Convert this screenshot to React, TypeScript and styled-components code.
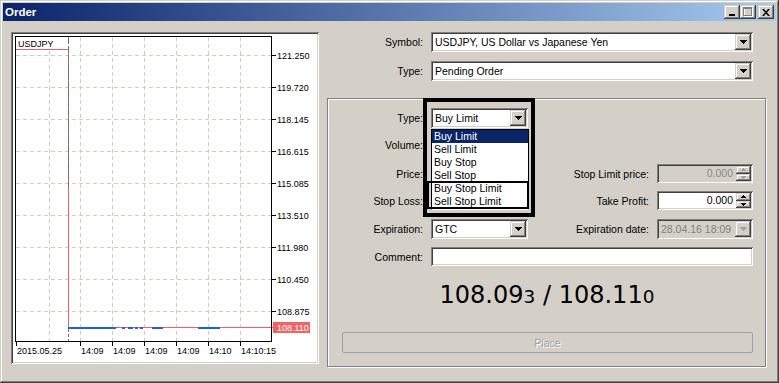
import React from "react";
import styled, { createGlobalStyle } from "styled-components";

const GlobalStyle = createGlobalStyle`
  html, body { margin: 0; padding: 0; background: #d4d0c8; }
  body {
    font-family: "Liberation Sans", Arial, sans-serif;
    font-size: 10.5px;
    color: #000;
  }
  * { box-sizing: border-box; }
`;

const raised = `
  background: #d4d0c8;
  box-shadow: inset -1px -1px #404040, inset 1px 1px #d4d0c8,
    inset -2px -2px #808080, inset 2px 2px #ffffff;
`;

const sunken = `
  box-shadow: inset 1px 1px #808080, inset -1px -1px #ffffff,
    inset 2px 2px #404040, inset -2px -2px #d4d0c8;
`;

const Window = styled.div`
  width: 779px;
  height: 383px;
  padding: 3px;
  display: flex;
  flex-direction: column;
  background: #d4d0c8;
  box-shadow: inset -1px -1px #404040, inset 1px 1px #d4d0c8,
    inset -2px -2px #808080, inset 2px 2px #ffffff;
`;

const TitleBar = styled.div`
  height: 18px;
  display: flex;
  align-items: center;
  padding: 0 2px 0 2px;
  background: linear-gradient(to right, #0a246a, #a6caf0);
`;

const Title = styled.div`
  flex: 1;
  color: #fff;
  font-weight: bold;
  font-size: 11.5px;
`;

const TitleButton = styled.div<{ $gap?: boolean }>`
  ${raised}
  width: 16px;
  height: 14px;
  margin-left: ${({ $gap }) => ($gap ? "2px" : "0")};
  display: flex;
  align-items: center;
  justify-content: center;
`;

const Body = styled.div`
  display: flex;
  gap: 8px;
  padding: 11px 0 0 8px;
`;

const ChartPanel = styled.div`
  ${sunken}
  width: 308px;
  height: 332px;
  padding: 2px;
  background: #fff;
  svg { display: block; }
`;

const RightColumn = styled.div`
  width: 440px;
  display: flex;
  flex-direction: column;
`;

const TopForm = styled.div`
  display: grid;
  grid-template-columns: 96px 322px;
  column-gap: 8px;
  row-gap: 9px;
`;

const Label = styled.div`
  line-height: 20px;
  text-align: right;
  white-space: nowrap;
`;

const Combo = styled.div<{ $disabled?: boolean }>`
  ${sunken}
  height: 20px;
  padding: 2px;
  display: flex;
  background: ${({ $disabled }) => ($disabled ? "#d4d0c8" : "#fff")};
  color: ${({ $disabled }) => ($disabled ? "#808080" : "#000")};
`;

const ComboText = styled.div`
  flex: 1;
  padding-left: 2px;
  line-height: 16px;
  white-space: nowrap;
  overflow: hidden;
`;

const DropButton = styled.div`
  ${raised}
  width: 16px;
  display: flex;
  align-items: center;
  justify-content: center;
`;

const Edit = styled.div<{ $disabled?: boolean; $span?: boolean }>`
  ${sunken}
  height: 19px;
  padding: 2px;
  display: flex;
  grid-column: ${({ $span }) => ($span ? "2 / 5" : "auto")};
  background: ${({ $disabled }) => ($disabled ? "#d4d0c8" : "#fff")};
  color: ${({ $disabled }) => ($disabled ? "#8a8a8a" : "#000")};
`;

const EditText = styled.div`
  flex: 1;
  text-align: right;
  padding-right: 3px;
  line-height: 15px;
`;

const SpinBox = styled.div`
  width: 15px;
  display: flex;
  flex-direction: column;
`;

const SpinButton = styled.div`
  ${raised}
  flex: 1;
  display: flex;
  align-items: center;
  justify-content: center;
`;

const GroupBox = styled.div`
  margin-top: 17px;
  width: 439px;
  border: 1px solid #808080;
  box-shadow: inset 1px 1px 0 #fff, 1px 1px 0 #fff;
  padding: 9px 12px 13px 1px;
  display: flex;
  flex-direction: column;
`;

const FormGrid = styled.div`
  display: grid;
  grid-template-columns: 94px 97px 113px 96px;
  grid-template-rows: 27px 29px 27px 28px 28px 19px;
  column-gap: 8px;
  align-items: start;
`;

const OverlayCell = styled.div`
  position: relative;
  z-index: 5;
`;

const DropList = styled.div`
  position: absolute;
  left: 0;
  top: 21px;
  width: 98px;
  background: #fff;
  border: 1px solid #000;
`;

const DropItem = styled.div<{ $selected?: boolean }>`
  height: 13px;
  line-height: 13px;
  padding-left: 2px;
  white-space: nowrap;
  background: ${({ $selected }) => ($selected ? "#0a246a" : "transparent")};
  color: ${({ $selected }) => ($selected ? "#fff" : "#000")};
`;

const Highlight = styled.div<{ $w: number; $h: number; $l: number; $t: number; $b: number }>`
  position: absolute;
  left: ${({ $l }) => $l}px;
  top: ${({ $t }) => $t}px;
  width: ${({ $w }) => $w}px;
  height: ${({ $h }) => $h}px;
  border: ${({ $b }) => $b}px solid #000;
  pointer-events: none;
`;

const PriceLine = styled.div`
  margin-top: 17px;
  margin-right: -12px;
  padding-left: 0;
  text-align: center;
  font-family: "DejaVu Sans", Verdana, sans-serif;
  font-size: 24px;
  line-height: 24px;
`;

const SmallDigit = styled.span`
  font-size: 18.5px;
`;

const PlaceButton = styled.div`
  margin: 23px 0 0 13px;
  height: 21px;
  border: 1px solid #a0a0a0;
  border-radius: 2px;
  display: flex;
  align-items: center;
  justify-content: center;
  color: #a0a0a0;
  text-shadow: 1px 1px 0 #fff;
`;

const DownArrow = ({ color = "#000" }: { color?: string }) => (
  <svg width="7" height="4" viewBox="0 0 7 4">
    <path d="M0 0H7V1H6V2H5V3H4V4H3V3H2V2H1V1H0Z" fill={color} />
  </svg>
);

const SpinArrow = ({ up, color = "#000" }: { up?: boolean; color?: string }) => (
  <svg width="5" height="3" viewBox="0 0 5 3" style={{ transform: up ? "none" : "scaleY(-1)" }}>
    <path d="M2 0H3V1H4V2H5V3H0V2H1V1H2Z" fill={color} />
  </svg>
);

const ComboBox = ({ text, disabled }: { text: string; disabled?: boolean }) => (
  <Combo $disabled={disabled}>
    <ComboText>{text}</ComboText>
    <DropButton>
      <DownArrow color={disabled ? "#a0a0a0" : "#000"} />
    </DropButton>
  </Combo>
);

const SpinEdit = ({ value = "", disabled }: { value?: string; disabled?: boolean }) => (
  <Edit $disabled={disabled}>
    <EditText>{value}</EditText>
    <SpinBox>
      <SpinButton>
        <SpinArrow up color={disabled ? "#a0a0a0" : "#000"} />
      </SpinButton>
      <SpinButton>
        <SpinArrow color={disabled ? "#a0a0a0" : "#000"} />
      </SpinButton>
    </SpinBox>
  </Edit>
);

const gridY = [55, 87, 119, 151, 183, 215, 247, 279, 311];
const prices = ["121.250", "119.720", "118.145", "116.615", "115.085", "113.510", "111.980", "110.450", "108.875"];
const gridX = [49, 80, 112, 144, 176, 208, 240];
const times: [number, string][] = [
  [16, "2015.05.25"],
  [80, "14:09"],
  [112, "14:09"],
  [144, "14:09"],
  [176, "14:09"],
  [208, "14:10"],
  [240, "14:10:15"],
];
const blueBars: [number, number][] = [
  [68, 116], [122, 125], [128, 133], [135, 138], [140, 143], [152, 163], [198, 220],
];

const Chart = () => (
  <svg width="304" height="328" fontFamily="Liberation Sans, Arial, sans-serif" fontSize="9">
    <g transform="translate(-13,-34)" shapeRendering="crispEdges">
      {gridY.map((y) => (
        <line key={"h" + y} x1={16} x2={271} y1={y + 0.5} y2={y + 0.5} stroke="#cfcdc0" strokeDasharray="4 3" />
      ))}
      {gridX.map((x) => (
        <line key={"v" + x} x1={x + 0.5} x2={x + 0.5} y1={37} y2={341} stroke="#cfcdc0" strokeDasharray="4 3" />
      ))}
      <rect x={16} y={37} width={51} height={12} fill="#fff" />
      <text x={18} y={46.5} fill="#000">USDJPY</text>

      <line x1={16} x2={69} y1={49.5} y2={49.5} stroke="#f26060" />
      <line x1={68.5} x2={68.5} y1={49.5} y2={328} stroke="#f26060" />
      <line x1={68.5} x2={68.5} y1={37} y2={190} stroke="#707070" strokeDasharray="7 2" />
      <line x1={68} x2={273} y1={327.5} y2={327.5} stroke="#f26060" />
      {blueBars.map(([a, b]) => (
        <rect key={a} x={a} y={327} width={b - a} height={2} fill="#2060e8" />
      ))}
      <line x1={68.5} x2={68.5} y1={329} y2={341} stroke="#707070" strokeDasharray="3 2" />

      <rect x={15.5} y={36.5} width={256} height={305} fill="none" stroke="#000" />

      {gridY.map((y, i) => (
        <g key={"p" + y}>
          <line x1={272} x2={276} y1={y + 0.5} y2={y + 0.5} stroke="#000" />
          <text x={277} y={y + 3.5} fill="#000">{prices[i]}</text>
        </g>
      ))}
      <rect x={273} y={322} width={37} height={11} fill="#f26464" />
      <text x={277} y={330.5} fill="#fff">108.110</text>

      {times.map(([x, t], i) => (
        <g key={"t" + i}>
          <line x1={x + 0.5} x2={x + 0.5} y1={342} y2={346} stroke="#000" />
          <text x={x + 1} y={354} fill="#000">{t}</text>
        </g>
      ))}
    </g>
  </svg>
);

export default function App() {
  return (
    <>
      <GlobalStyle />
      <Window>
        <TitleBar>
          <Title>Order</Title>
          <TitleButton>
            <svg width="8" height="10" viewBox="0 0 8 10">
              <rect x="1" y="7" width="6" height="2" fill="#000" />
            </svg>
          </TitleButton>
          <TitleButton>
            <svg width="10" height="10" viewBox="0 0 10 10">
              <rect x="1.5" y="1.5" width="8" height="8" fill="none" stroke="#fff" />
              <rect x="0.5" y="0.5" width="8" height="8" fill="none" stroke="#808080" />
              <rect x="1" y="1" width="7" height="1" fill="#808080" />
            </svg>
          </TitleButton>
          <TitleButton $gap>
            <svg width="8" height="7" viewBox="0 0 8 7">
              <path d="M0 0H2L4 2.5 6 0H8L5 3.5 8 7H6L4 4.5 2 7H0L3 3.5Z" fill="#000" />
            </svg>
          </TitleButton>
        </TitleBar>
        <Body>
          <ChartPanel>
            <Chart />
          </ChartPanel>
          <RightColumn>
            <TopForm>
              <Label>Symbol:</Label>
              <ComboBox text="USDJPY, US Dollar vs Japanese Yen" />
              <Label>Type:</Label>
              <ComboBox text="Pending Order" />
            </TopForm>
            <GroupBox>
              <FormGrid>
                <Label>Type:</Label>
                <OverlayCell>
                  <ComboBox text="Buy Limit" />
                  <DropList>
                    <DropItem $selected>Buy Limit</DropItem>
                    <DropItem>Sell Limit</DropItem>
                    <DropItem>Buy Stop</DropItem>
                    <DropItem>Sell Stop</DropItem>
                    <DropItem>Buy Stop Limit</DropItem>
                    <DropItem>Sell Stop Limit</DropItem>
                  </DropList>
                  <Highlight $l={-8} $t={-10} $w={112} $h={119} $b={4} />
                  <Highlight $l={-4} $t={73} $w={102} $h={28} $b={2} />
                </OverlayCell>
                <div />
                <div />

                <Label>Volume:</Label>
                <SpinEdit />
                <div />
                <div />

                <Label>Price:</Label>
                <SpinEdit />
                <Label>Stop Limit price:</Label>
                <SpinEdit value="0.000" disabled />

                <Label>Stop Loss:</Label>
                <SpinEdit />
                <Label>Take Profit:</Label>
                <SpinEdit value="0.000" />

                <Label>Expiration:</Label>
                <ComboBox text="GTC" />
                <Label>Expiration date:</Label>
                <ComboBox text="28.04.16 18:09" disabled />

                <Label>Comment:</Label>
                <Edit $span />
              </FormGrid>
              <PriceLine>
                108.09<SmallDigit>3</SmallDigit> / 108.11<SmallDigit>0</SmallDigit>
              </PriceLine>
              <PlaceButton>Place</PlaceButton>
            </GroupBox>
          </RightColumn>
        </Body>
      </Window>
    </>
  );
}
